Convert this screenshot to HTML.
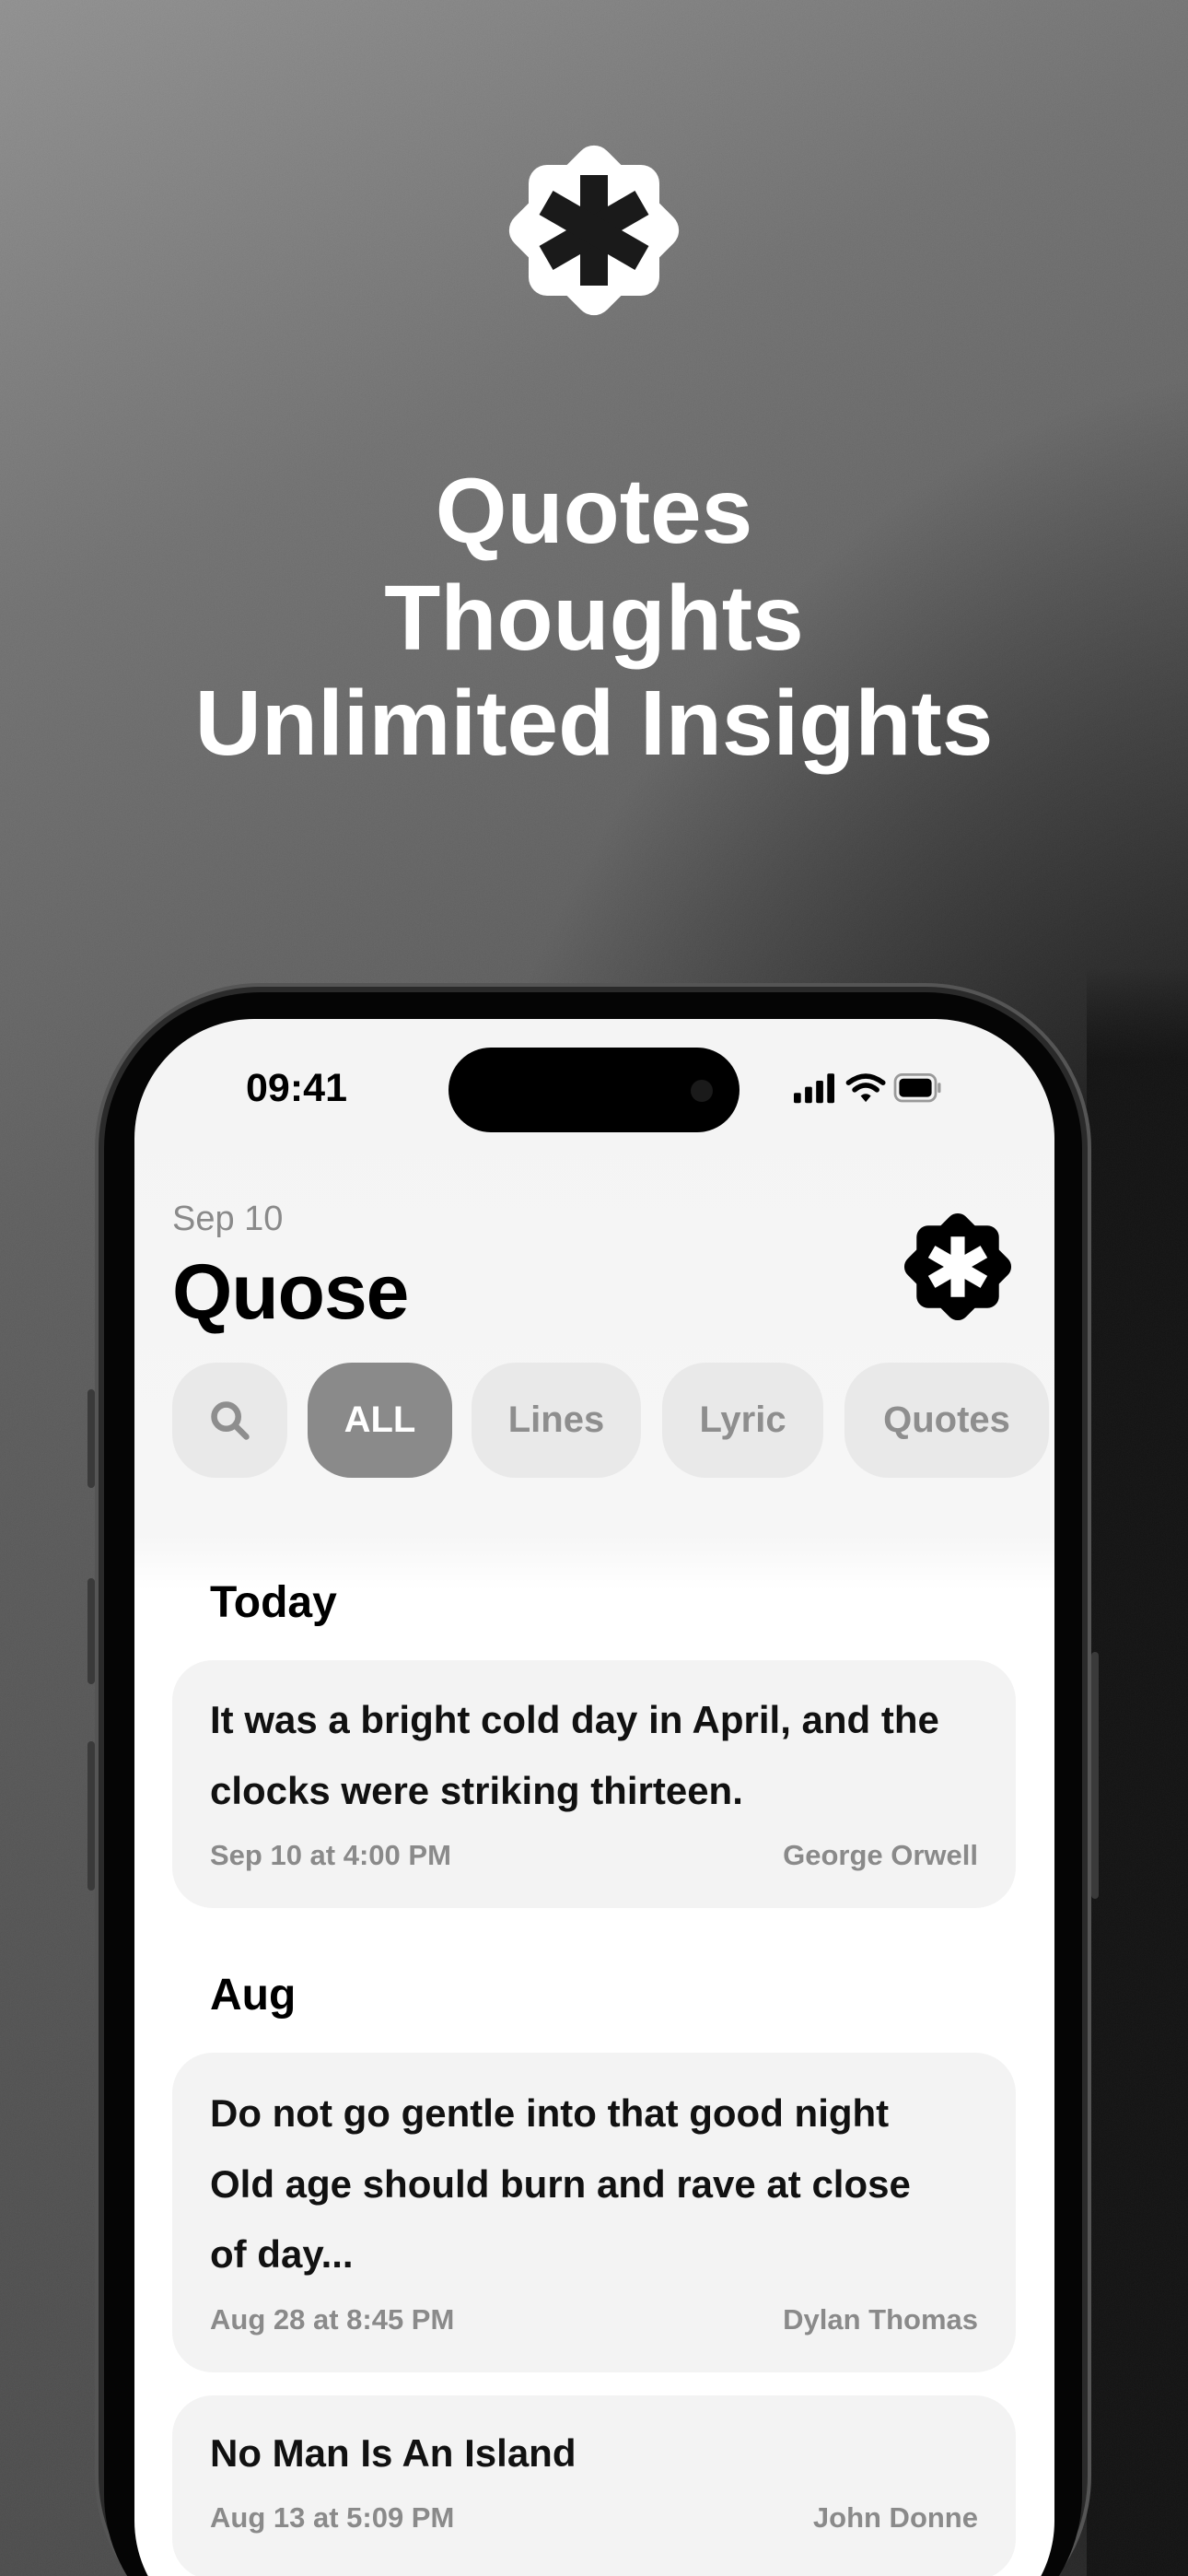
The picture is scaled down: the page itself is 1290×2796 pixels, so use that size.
<!DOCTYPE html>
<html><head><meta charset="utf-8"><style>
*{margin:0;padding:0;box-sizing:border-box}
html,body{width:1290px;height:2796px;overflow:hidden}
body{position:relative;font-family:"Liberation Sans",sans-serif;background:#000}
.bg{position:absolute;inset:0;background:linear-gradient(to bottom,rgba(0,0,0,0) 0,rgba(0,0,0,0) 1050px,#000 1150px) right/110px 100% no-repeat,radial-gradient(ellipse 1000px 1500px at 1400px 1900px,rgba(0,0,0,1) 0,rgba(0,0,0,.9) 45%,rgba(0,0,0,0) 100%),linear-gradient(155deg,#8c8c8c 0%,#6a6a6a 20%,#555 40%,#484848 65%,#3a3a3a 100%)}
.noise{position:absolute;inset:0;opacity:.12}
.h{position:absolute;left:0;width:1290px;text-align:center;color:#fff;font-weight:700;font-size:100px;letter-spacing:0}
.phone{position:absolute;left:103px;top:1067px;width:1082px;height:1800px;border-radius:180px;background:#2a2a2a;border:4px solid #555}
.phone2{position:absolute;left:113px;top:1077px;width:1062px;height:1800px;border-radius:170px;background:#050505}
.screen{position:absolute;left:146px;top:1106px;width:999px;height:1760px;border-radius:130px;background:linear-gradient(#f4f4f4 0,#f6f6f6 560px,#fff 620px,#fff 100%);overflow:hidden}
.btn{position:absolute;background:#3a3a3a;border-radius:4px}
.t{position:absolute;white-space:nowrap}
.chip{position:absolute;top:373px;height:125px;border-radius:48px;background:#e9e9e9;color:#8e8e8e;font-weight:700;font-size:40px;display:flex;align-items:center;justify-content:center}
.card{position:absolute;left:41px;width:916px;background:#f3f3f3;border-radius:44px}
.q{position:absolute;left:41px;font-weight:700;font-size:42px;color:#111;letter-spacing:0;white-space:nowrap}
.m{position:absolute;font-size:31px;color:#8a8a8a;font-weight:700;white-space:nowrap}
</style></head><body>
<div class="bg"></div>
<svg class="noise" width="1290" height="2796"><filter id="n"><feTurbulence type="fractalNoise" baseFrequency="1.2" numOctaves="2" seed="3"/><feColorMatrix type="matrix" values="0.33 0.33 0.33 0 0 0.33 0.33 0.33 0 0 0.33 0.33 0.33 0 0 0 0 0 0 1"/></filter><rect width="1290" height="2796" filter="url(#n)"/></svg>

<svg style="position:absolute;left:545px;top:150px" width="200" height="200" viewBox="0 0 200 200">
<g fill="#fff"><rect x="29" y="29" width="142" height="142" rx="20"/><rect x="29" y="29" width="142" height="142" rx="20" transform="rotate(45 100 100)"/></g>
<g fill="#1a1a1a"><rect x="85" y="40" width="30" height="120"/><rect x="85" y="40" width="30" height="120" transform="rotate(60 100 100)"/><rect x="85" y="40" width="30" height="120" transform="rotate(-60 100 100)"/></g>
</svg>

<div class="h" style="top:498px">Quotes</div>
<div class="h" style="top:614px">Thoughts</div>
<div class="h" style="top:728px">Unlimited Insights</div>

<div class="btn" style="left:95px;top:1508px;width:8px;height:107px"></div>
<div class="btn" style="left:95px;top:1713px;width:8px;height:115px"></div>
<div class="btn" style="left:95px;top:1890px;width:8px;height:162px"></div>
<div class="btn" style="left:1185px;top:1793px;width:8px;height:268px"></div>
<div class="phone"></div>
<div class="phone2"></div>
<div class="screen">
  <div class="t" style="left:121px;top:51px;font-size:43px;font-weight:700;color:#000">09:41</div>
  <div style="position:absolute;left:341px;top:31px;width:316px;height:92px;border-radius:46px;background:#000"></div>
  <div style="position:absolute;left:604px;top:66px;width:24px;height:24px;border-radius:12px;background:#1a1a1a"></div>
  <svg style="position:absolute;left:716px;top:56px" width="200" height="44" viewBox="0 0 150 40" preserveAspectRatio="xMinYMin meet">
    <rect x="0" y="22" width="7" height="10" rx="1.5"/><rect x="11" y="16" width="7" height="16" rx="1.5"/><rect x="22" y="10" width="7" height="22" rx="1.5"/><rect x="33" y="3" width="7" height="29" rx="1.5"/>
    <g fill="none" stroke="#000" stroke-width="5" stroke-linecap="round"><path d="M54 12 Q71 -1 88 12"/><path d="M60 19 Q71 10 82 19"/></g>
    <path d="M66 25 L71 31 L76 25 Q71 21 66 25Z"/>
    <rect x="100" y="4" width="40" height="26" rx="7" fill="none" stroke="#999" stroke-width="2.5"/><rect x="104" y="8" width="32" height="18" rx="4"/><rect x="142" y="12" width="3" height="10" rx="1.5" fill="#999"/>
  </svg>
  <div class="t" style="left:41px;top:196px;font-size:38px;color:#8a8a8a">Sep 10</div>
  <div class="t" style="left:41px;top:248px;font-size:84px;font-weight:700;color:#000;letter-spacing:-1px">Quose</div>
  <svg style="position:absolute;left:831px;top:206px" width="126" height="126" viewBox="0 0 200 200">
    <g fill="#000"><rect x="29" y="29" width="142" height="142" rx="20"/><rect x="29" y="29" width="142" height="142" rx="20" transform="rotate(45 100 100)"/></g>
    <g fill="#fff"><rect x="88" y="48" width="24" height="104"/><rect x="88" y="48" width="24" height="104" transform="rotate(60 100 100)"/><rect x="88" y="48" width="24" height="104" transform="rotate(-60 100 100)"/></g>
  </svg>
  <div class="chip" style="left:41px;width:125px"><svg width="48" height="48" viewBox="0 0 44 44" fill="none" stroke="#8e8e8e" stroke-width="6" stroke-linecap="round"><circle cx="18" cy="18" r="12"/><path d="M27 27 L38 38"/></svg></div>
  <div class="chip" style="left:188px;width:157px;background:#8a8a8a;color:#fff">ALL</div>
  <div class="chip" style="left:366px;width:184px">Lines</div>
  <div class="chip" style="left:573px;width:175px">Lyric</div>
  <div class="chip" style="left:771px;width:222px">Quotes</div>

  <div class="t" style="left:82px;top:606px;font-size:48px;font-weight:700;color:#000">Today</div>
  <div class="card" style="top:696px;height:269px"></div>
  <div class="q" style="left:82px;top:737px">It was a bright cold day in April, and the</div>
  <div class="q" style="left:82px;top:814px">clocks were striking thirteen.</div>
  <div class="m" style="left:82px;top:890px">Sep 10 at 4:00 PM</div>
  <div class="m" style="right:83px;top:890px">George Orwell</div>

  <div class="t" style="left:82px;top:1032px;font-size:48px;font-weight:700;color:#000">Aug</div>
  <div class="card" style="top:1122px;height:347px"></div>
  <div class="q" style="left:82px;top:1164px">Do not go gentle into that good night</div>
  <div class="q" style="left:82px;top:1241px">Old age should burn and rave at close</div>
  <div class="q" style="left:82px;top:1317px">of day...</div>
  <div class="m" style="left:82px;top:1394px">Aug 28 at 8:45 PM</div>
  <div class="m" style="right:83px;top:1394px">Dylan Thomas</div>

  <div class="card" style="top:1494px;height:200px"></div>
  <div class="q" style="left:82px;top:1533px">No Man Is An Island</div>
  <div class="m" style="left:82px;top:1609px">Aug 13 at 5:09 PM</div>
  <div class="m" style="right:83px;top:1609px">John Donne</div>
</div>
</body></html>
